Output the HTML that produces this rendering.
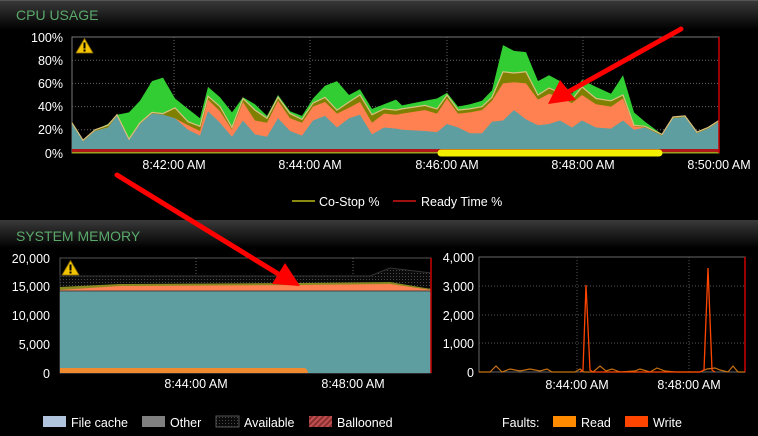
<!DOCTYPE html>
<html><head><meta charset="utf-8"><style>
html,body{margin:0;padding:0;background:#000;width:758px;height:436px;overflow:hidden}
svg{display:block;font-family:"Liberation Sans",sans-serif}
</style></head><body>
<svg id="s" width="758" height="436" viewBox="0 0 758 436" xmlns="http://www.w3.org/2000/svg">
<defs>
<linearGradient id="hg" x1="0" y1="0" x2="0" y2="1"><stop offset="0" stop-color="#3a3a3a"/><stop offset="1" stop-color="#000"/></linearGradient>
<pattern id="dots" width="3" height="3" patternUnits="userSpaceOnUse"><rect width="3" height="3" fill="#0a0a0a"/><rect width="1" height="1" fill="#4a4a4a"/></pattern>
<pattern id="hatch" width="4" height="4" patternUnits="userSpaceOnUse" patternTransform="rotate(45)"><rect width="4" height="4" fill="#8a3030"/><rect width="2" height="4" fill="#c05050"/></pattern>
</defs>
<rect x="0" y="0" width="758" height="30" fill="url(#hg)"/>
<rect x="0" y="0" width="758" height="1" fill="#555"/>
<text x="16" y="20" fill="#5aa86a" font-size="14">CPU USAGE</text>
<g id="cpu"></g>
<g fill="#fff" font-size="12.5" text-anchor="end">
<text x="63" y="42">100%</text><text x="63" y="65">80%</text><text x="63" y="88">60%</text><text x="63" y="111">40%</text><text x="63" y="134">20%</text><text x="63" y="158">0%</text>
</g>
<g fill="#fff" font-size="12.5" text-anchor="middle">
<text x="174" y="169">8:42:00 AM</text><text x="310" y="169">8:44:00 AM</text><text x="447" y="169">8:46:00 AM</text><text x="583" y="169">8:48:00 AM</text><text x="719" y="169">8:50:00 AM</text>
</g>
<line x1="441" y1="153" x2="659" y2="153" stroke="#f5f000" stroke-width="7" stroke-linecap="round"/>
<line x1="292" y1="201" x2="315" y2="201" stroke="#8a8a10" stroke-width="2"/>
<text x="319" y="206" fill="#fff" font-size="12.5">Co-Stop %</text>
<line x1="393" y1="201" x2="416" y2="201" stroke="#a01010" stroke-width="2"/>
<text x="421" y="206" fill="#fff" font-size="12.5">Ready Time %</text>

<rect x="0" y="220" width="758" height="28" fill="url(#hg)"/>
<text x="16" y="241" fill="#5aa86a" font-size="14">SYSTEM MEMORY</text>
<g id="mem">
<rect x="60" y="258" width="371" height="115" fill="#000" stroke="#555"/>
<line x1="196" y1="258" x2="196" y2="373" stroke="#666" stroke-dasharray="1,2"/>
<line x1="353" y1="258" x2="353" y2="373" stroke="#666" stroke-dasharray="1,2"/>
<path d="M60,276 L200,276 L300,276 L370,276 L390,268 L431,273 L431,291 L60,291Z" fill="url(#dots)" stroke="#333"/>
<path d="M60,287 L120,284 L300,283 L390,282 L431,289 L431,292 L60,292Z" fill="#8a8a20"/>
<path d="M60,290 L120,286 L300,285 L390,284 L431,290 L431,292 L60,292Z" fill="#ff8050"/>
<rect x="60" y="291" width="371" height="82" fill="#5f9ea0"/>
<line x1="60" y1="291" x2="431" y2="291" stroke="#444"/>
<path d="M60,368 L304,368 Q307,368 308,373 L60,373Z" fill="#f08a30"/>
<line x1="431" y1="258" x2="431" y2="373" stroke="#c00" stroke-width="1.5"/>
</g>
<g fill="#fff" font-size="12.5" text-anchor="end">
<text x="50" y="263">20,000</text><text x="50" y="291">15,000</text><text x="50" y="320">10,000</text><text x="50" y="349">5,000</text><text x="50" y="378">0</text>
</g>
<g fill="#fff" font-size="12.5" text-anchor="middle">
<text x="196" y="388">8:44:00 AM</text><text x="353" y="388">8:48:00 AM</text>
</g>
<rect x="43" y="416" width="23" height="11" fill="#b0c4de"/><text x="71" y="427" fill="#fff" font-size="12.5">File cache</text>
<rect x="142" y="416" width="23" height="11" fill="#808080"/><text x="170" y="427" fill="#fff" font-size="12.5">Other</text>
<rect x="216" y="416" width="23" height="11" fill="url(#dots)" stroke="#555"/><text x="244" y="427" fill="#fff" font-size="12.5">Available</text>
<rect x="309" y="416" width="23" height="11" fill="url(#hatch)"/><text x="337" y="427" fill="#fff" font-size="12.5">Ballooned</text>

<g id="flt">
<rect x="479" y="257" width="266" height="115" fill="#000" stroke="#666"/>
<g stroke="#555" stroke-dasharray="1,2">
<line x1="479" y1="286" x2="745" y2="286"/><line x1="479" y1="315" x2="745" y2="315"/><line x1="479" y1="343" x2="745" y2="343"/>
<line x1="577" y1="257" x2="577" y2="372"/><line x1="689" y1="257" x2="689" y2="372"/>
</g>
<line x1="745" y1="257" x2="745" y2="372" stroke="#c00" stroke-width="1.5"/>
<polyline fill="none" stroke="#c87010" stroke-width="1.2" points="479,372 490,372 496,366 502,372 510,369 520,371 530,369 540,371 547,369 552,372 560,372 575,372 580,369 584,372 593,372 600,366 606,371 612,369 620,372 635,371 640,369 650,372 657,368 665,371 675,372 685,372 700,372 707,369 715,368 720,370 728,372 733,366 738,372 745,372"/>
<polyline fill="none" stroke="#ff4500" stroke-width="1.3" points="580,372 583,370 586,285 590,370 593,372 700,372 704,370 708,268 712,370 715,372"/>
</g>
<g fill="#fff" font-size="12.5" text-anchor="end">
<text x="474" y="262">4,000</text><text x="474" y="291">3,000</text><text x="474" y="320">2,000</text><text x="474" y="348">1,000</text><text x="474" y="377">0</text>
</g>
<g fill="#fff" font-size="12.5" text-anchor="middle">
<text x="577" y="389">8:44:00 AM</text><text x="689" y="389">8:48:00 AM</text>
</g>
<text x="502" y="427" fill="#fff" font-size="12.5">Faults:</text>
<rect x="553" y="416" width="23" height="11" fill="#ff8c00"/><text x="581" y="427" fill="#fff" font-size="12.5">Read</text>
<rect x="625" y="416" width="23" height="11" fill="#ff4500"/><text x="653" y="427" fill="#fff" font-size="12.5">Write</text>

<g transform="translate(76,38)"><path d="M8.5,0.5 L17,15 L0,15Z" fill="#f5c400" stroke="#8a6d00" stroke-width="0.8" stroke-linejoin="round"/><rect x="7.5" y="4.5" width="2" height="6" fill="#000"/><rect x="7.5" y="11.5" width="2" height="2" fill="#000"/></g>
<g transform="translate(62,260)"><path d="M8.5,0.5 L17,15 L0,15Z" fill="#f5c400" stroke="#8a6d00" stroke-width="0.8" stroke-linejoin="round"/><rect x="7.5" y="4.5" width="2" height="6" fill="#000"/><rect x="7.5" y="11.5" width="2" height="2" fill="#000"/></g>

<g id="arrows">
<line x1="681" y1="29" x2="568" y2="92" stroke="#f00" stroke-width="5" stroke-linecap="round"/>
<path d="M548,104 L560,80 L576,100Z" fill="#f00"/>
<line x1="117" y1="175" x2="280" y2="275" stroke="#f00" stroke-width="5" stroke-linecap="round"/>
<path d="M300,286 L272,284 L285,263Z" fill="#f00"/>
</g>
</svg>
<script>
var d=[[72,25,25,26,26],[83,10,10,11,11],[95,19,19,20,20],[108,22,22,24,25],[117,32,32,33,33],[129,11,11,12,35],[140,25,25,26,45],[152,34,34,35,62],[163,33,33,34,65],[175,30,30,39,47],[188,20,24,27,38],[200,15,19,23,30],[208,36,46,49,57],[220,26,36,40,48],[232,14,20,22,35],[243,28,44,47,48],[255,16,28,37,42],[267,14,26,30,32],[278,30,45,48,50],[290,19,30,34,36],[302,15,26,29,32],[313,28,40,43,47],[325,32,44,48,58],[337,22,34,37,62],[349,30,39,44,50],[360,33,44,50,55],[372,16,26,33,38],[384,22,34,38,42],[396,21,33,37,46],[402,20,34,38,41],[425,19,37,41,45],[437,18,34,38,47],[447,25,47,50,52],[458,22,34,37,40],[470,17,35,38,42],[482,17,37,40,45],[492,27,45,48,54],[503,28,60,70,93],[514,37,61,69,88],[526,29,60,70,87],[538,24,46,50,62],[549,25,51,56,67],[560,28,48,52,62],[572,22,43,46,51],[582,28,50,57,63],[596,22,42,47,57],[611,21,40,45,51],[623,28,47,50,67],[634,20,23,24,35],[645,22,22,23,27],[662,15,15,16,16],[673,30,30,31,31],[685,31,31,32,32],[697,17,17,18,18],[708,21,21,22,22],[719,27,27,28,28]];
function Y(p){return (153-p*1.16).toFixed(1)}
var g=document.getElementById('cpu'),h='';
h+='<rect x="72" y="37" width="647" height="116" fill="#000" stroke="#777"/>';
[20,40,60,80].forEach(function(p){h+='<line x1="72" x2="719" y1="'+Y(p)+'" y2="'+Y(p)+'" stroke="#666" stroke-dasharray="1,2"/>'});
[174,310,447,583].forEach(function(x){h+='<line x1="'+x+'" x2="'+x+'" y1="37" y2="153" stroke="#666" stroke-dasharray="1,2"/>'});
var cols=['#5f9ea0','#ff8050','#808000','#32cd32'];
for(var k=4;k>=1;k--){var p='M72,153';d.forEach(function(r){p+=' L'+r[0]+','+Y(r[k])});p+=' L719,153Z';h+='<path d="'+p+'" fill="'+cols[k-1]+'"/>';}
var l='';d.forEach(function(r,i){l+=(i?' L':'M')+r[0]+','+Y(r[3])});h+='<path d="'+l+'" fill="none" stroke="#d8c080" stroke-width="1.2"/>';
h+='<rect x="72" y="149" width="647" height="3" fill="#b01818"/><rect x="72" y="152" width="647" height="1.5" fill="#a0a020"/>';
h+='<line x1="719" y1="37" x2="719" y2="153" stroke="#c00" stroke-width="1.5"/>';
g.innerHTML=h;
</script>
</body></html>
